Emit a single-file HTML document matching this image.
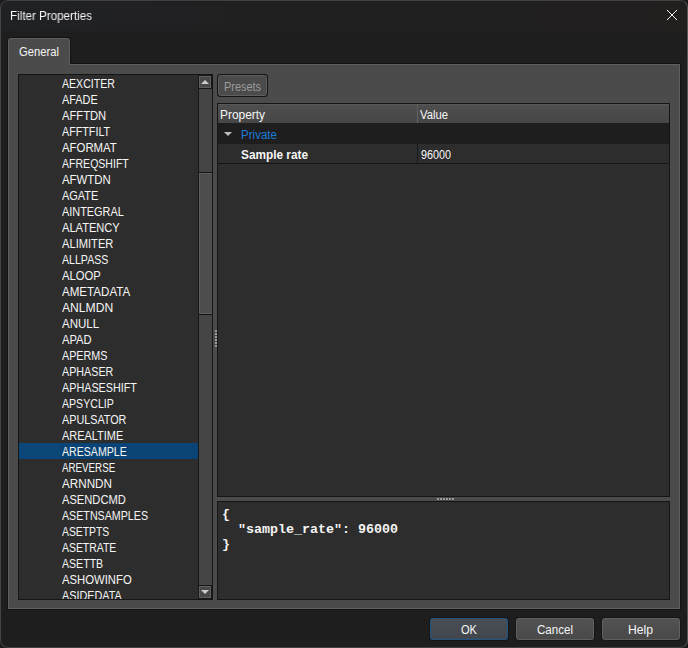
<!DOCTYPE html>
<html><head><meta charset="utf-8"><title>Filter Properties</title>
<style>
*{box-sizing:border-box;margin:0;padding:0}
html,body{width:688px;height:648px;overflow:hidden;background:#1b1b1b}
body{font-family:"Liberation Sans",sans-serif;font-size:12px;color:#f6f6f6;position:relative}
.abs{position:absolute}
#win{left:0;top:0;width:688px;height:648px;border:1px solid #434343;border-color:#404040 #575757 #434343 #454545;border-radius:8px;background:#1e1e1e;overflow:hidden}
#tbar{left:0;top:0;width:686px;height:30px;background:linear-gradient(90deg,#202124,#202020 50%,#221f1f)}
.t{position:absolute;white-space:nowrap;line-height:16px;height:16px;transform-origin:0 50%}
#pane{left:8px;top:64px;width:672px;height:545px;background:#4b4b4b;border:1px solid #5f5f5f;box-shadow:0 0 0 1px #121212}
#tab{left:8px;top:38px;width:62px;height:27px;background:#4b4b4b;border:1px solid #5f5f5f;border-bottom:0;border-radius:3px 3px 0 0;box-shadow:0 0 0 1px #121212}
.dark{background:#2d2d2d;border:1px solid #151515}
.row{position:absolute;left:0;width:179px;height:16px}
.row.sel{background:linear-gradient(90deg,#0b4779 41px,#0a4375 41px)}
.btn{position:absolute;height:22px;border:1px solid #616161;border-radius:2.5px;background:linear-gradient(#525252,#494949);box-shadow:0 0 0 1px #161616}
.dot{position:absolute;width:2px;height:2px;background:#9a9a9a}
</style></head><body>
<div id="win" class="abs">
<div id="tbar" class="abs"></div>
</div>
<div class="t" id="title" style="will-change:transform;left:9.5px;top:8px;transform:scaleX(0.968)">Filter Properties</div>
<svg class="abs" style="left:666px;top:9px" width="12" height="12" viewBox="0 0 12 12"><path d="M1 1L11 11M11 1L1 11" stroke="#f4f4f4" stroke-width="1" fill="none"/></svg>

<div id="pane" class="abs"></div>
<div class="abs" style="left:7px;top:37px;width:64px;height:27px;background:#121212;border-radius:4px 4px 0 0"></div>
<div class="abs" style="left:8px;top:38px;width:62px;height:27px;background:#5f5f5f;border-radius:3px 3px 0 0"></div>
<div class="abs" style="left:9px;top:39px;width:60px;height:27px;background:#4b4b4b;border-radius:2px 2px 0 0"></div>
<div class="t" id="tabtxt" style="left:19px;top:44px;transform:scaleX(0.937)">General</div>

<!-- list -->
<div id="list" class="abs dark" style="left:18px;top:74px;width:195px;height:526px;overflow:hidden">
<div id="rows" class="abs" style="left:0;top:0;width:179px;height:524px;overflow:hidden">
<div class="row" style="top:0px"><span class="t" style="left:43px;top:1px;transform:scaleX(0.88)">AEXCITER</span></div>
<div class="row" style="top:16px"><span class="t" style="left:43px;top:1px;transform:scaleX(0.907)">AFADE</span></div>
<div class="row" style="top:32px"><span class="t" style="left:43px;top:1px;transform:scaleX(0.934)">AFFTDN</span></div>
<div class="row" style="top:48px"><span class="t" style="left:43px;top:1px;transform:scaleX(0.896)">AFFTFILT</span></div>
<div class="row" style="top:64px"><span class="t" style="left:43px;top:1px;transform:scaleX(0.948)">AFORMAT</span></div>
<div class="row" style="top:80px"><span class="t" style="left:43px;top:1px;transform:scaleX(0.879)">AFREQSHIFT</span></div>
<div class="row" style="top:96px"><span class="t" style="left:43px;top:1px;transform:scaleX(0.951)">AFWTDN</span></div>
<div class="row" style="top:112px"><span class="t" style="left:43px;top:1px;transform:scaleX(0.912)">AGATE</span></div>
<div class="row" style="top:128px"><span class="t" style="left:43px;top:1px;transform:scaleX(0.909)">AINTEGRAL</span></div>
<div class="row" style="top:144px"><span class="t" style="left:43px;top:1px;transform:scaleX(0.925)">ALATENCY</span></div>
<div class="row" style="top:160px"><span class="t" style="left:43px;top:1px;transform:scaleX(0.929)">ALIMITER</span></div>
<div class="row" style="top:176px"><span class="t" style="left:43px;top:1px;transform:scaleX(0.884)">ALLPASS</span></div>
<div class="row" style="top:192px"><span class="t" style="left:43px;top:1px;transform:scaleX(0.938)">ALOOP</span></div>
<div class="row" style="top:208px"><span class="t" style="left:43px;top:1px;transform:scaleX(0.965)">AMETADATA</span></div>
<div class="row" style="top:224px"><span class="t" style="left:43px;top:1px;transform:scaleX(1.01)">ANLMDN</span></div>
<div class="row" style="top:240px"><span class="t" style="left:43px;top:1px;transform:scaleX(0.959)">ANULL</span></div>
<div class="row" style="top:256px"><span class="t" style="left:43px;top:1px;transform:scaleX(0.934)">APAD</span></div>
<div class="row" style="top:272px"><span class="t" style="left:43px;top:1px;transform:scaleX(0.896)">APERMS</span></div>
<div class="row" style="top:288px"><span class="t" style="left:43px;top:1px;transform:scaleX(0.896)">APHASER</span></div>
<div class="row" style="top:304px"><span class="t" style="left:43px;top:1px;transform:scaleX(0.899)">APHASESHIFT</span></div>
<div class="row" style="top:320px"><span class="t" style="left:43px;top:1px;transform:scaleX(0.882)">APSYCLIP</span></div>
<div class="row" style="top:336px"><span class="t" style="left:43px;top:1px;transform:scaleX(0.9)">APULSATOR</span></div>
<div class="row" style="top:352px"><span class="t" style="left:43px;top:1px;transform:scaleX(0.912)">AREALTIME</span></div>
<div class="row sel" style="top:368px"><span class="t" style="left:43px;top:1px;transform:scaleX(0.883)">ARESAMPLE</span></div>
<div class="row" style="top:384px"><span class="t" style="left:43px;top:1px;transform:scaleX(0.814)">AREVERSE</span></div>
<div class="row" style="top:400px"><span class="t" style="left:43px;top:1px;transform:scaleX(0.974)">ARNNDN</span></div>
<div class="row" style="top:416px"><span class="t" style="left:43px;top:1px;transform:scaleX(0.929)">ASENDCMD</span></div>
<div class="row" style="top:432px"><span class="t" style="left:43px;top:1px;transform:scaleX(0.89)">ASETNSAMPLES</span></div>
<div class="row" style="top:448px"><span class="t" style="left:43px;top:1px;transform:scaleX(0.865)">ASETPTS</span></div>
<div class="row" style="top:464px"><span class="t" style="left:43px;top:1px;transform:scaleX(0.869)">ASETRATE</span></div>
<div class="row" style="top:480px"><span class="t" style="left:43px;top:1px;transform:scaleX(0.882)">ASETTB</span></div>
<div class="row" style="top:496px"><span class="t" style="left:43px;top:1px;transform:scaleX(0.942)">ASHOWINFO</span></div>
<div class="row" style="top:512px"><span class="t" style="left:43px;top:1px;transform:scaleX(0.903)">ASIDEDATA</span></div>
</div>
<div id="sb" class="abs" style="left:179px;top:0;width:14px;height:524px;background:#181818">
  <div class="abs" style="left:1px;top:1px;width:12px;height:12px;background:#484848;border:1px solid #5e5e5e"></div>
  <svg class="abs" style="left:3px;top:5px" width="8" height="4" viewBox="0 0 8 4"><path d="M0 4L4 0L8 4Z" fill="#cccccc"/></svg>
  <div class="abs" style="left:1px;top:14px;width:13px;height:496px;background:#454545"></div>
  <div class="abs" style="left:1px;top:97px;width:13px;height:143px;background:#151515"></div>
  <div class="abs" style="left:1px;top:98px;width:13px;height:141px;background:#4d4d4d;border:1px solid #5e5e5e;border-right-color:#505050"></div>
  <div class="abs" style="left:1px;top:511px;width:12px;height:12px;background:#484848;border:1px solid #5e5e5e"></div>
  <svg class="abs" style="left:3px;top:515px" width="8" height="4" viewBox="0 0 8 4"><path d="M0 0L4 4L8 0Z" fill="#cccccc"/></svg>
</div>
</div>

<!-- vertical splitter dots -->
<div class="dot" style="left:215px;top:330px"></div><div class="dot" style="left:215px;top:333px"></div><div class="dot" style="left:215px;top:336px"></div>
<div class="dot" style="left:215px;top:339px"></div><div class="dot" style="left:215px;top:342px"></div><div class="dot" style="left:215px;top:345px"></div>

<!-- presets button (disabled) -->
<div class="btn" style="left:218px;top:75px;width:49px;height:21px;border-color:#5e5e5e;background:#4b4b4b"></div>
<div class="t" style="left:224px;top:79px;color:#9b9b9b;transform:scaleX(0.909)">Presets</div>

<!-- property table -->
<div class="abs dark" style="left:217px;top:103px;width:453px;height:394px">
  <div class="abs" style="left:0;top:0;width:451px;height:19px;background:linear-gradient(#4e4e4e,#464646);border-top:1px solid #575757"></div>
  <div class="abs" style="left:199px;top:0;width:1px;height:19px;background:#626262"></div>
  <div class="abs" style="left:0;top:19px;width:451px;height:21px;background:#1e1e1e"></div>
  <div class="abs" style="left:0;top:59px;width:451px;height:1px;background:#151515"></div>
  <div class="abs" style="left:199px;top:40px;width:1px;height:19px;background:#191919"></div>
  <svg class="abs" style="left:6px;top:27.5px" width="8" height="4" viewBox="0 0 8 4"><path d="M0 0L4 4L8 0Z" fill="#bdbdbd"/></svg>
</div>
<div class="t" style="left:220px;top:107px;transform:scaleX(0.992)">Property</div>
<div class="t" style="left:420px;top:107px;transform:scaleX(0.939)">Value</div>
<div class="t" style="left:241px;top:127px;color:#1c7bd8;transform:scaleX(0.964)">Private</div>
<div class="t" style="left:241px;top:147px;font-weight:700;transform:scaleX(0.985)">Sample rate</div>
<div class="t" style="left:421px;top:147px;transform:scaleX(0.899)">96000</div>

<!-- horizontal splitter dots -->
<div class="dot" style="left:437px;top:498px"></div><div class="dot" style="left:440px;top:498px"></div><div class="dot" style="left:443px;top:498px"></div>
<div class="dot" style="left:446px;top:498px"></div><div class="dot" style="left:449px;top:498px"></div><div class="dot" style="left:452px;top:498px"></div>

<!-- json text -->
<div class="abs dark" style="left:217px;top:501px;width:453px;height:99px">
<pre class="abs" id="json" style="left:4px;top:5px;font-family:'Liberation Mono',monospace;font-weight:700;font-size:13.33px;line-height:15px;color:#f4f4f4">{
  "sample_rate": 96000
}</pre>
</div>

<!-- dialog buttons -->
<div class="btn" style="left:430px;top:618px;width:78px;border-color:#1c5788;background:linear-gradient(#4a4f55,#41464c)"></div>
<div class="btn" style="left:516px;top:618px;width:78px"></div>
<div class="btn" style="left:602px;top:618px;width:78px"></div>
<div class="t" style="left:461px;top:622px;transform:scaleX(0.923)">OK</div>
<div class="t" style="left:537px;top:622px;transform:scaleX(0.964)">Cancel</div>
<div class="t" style="left:628px;top:622px;transform:scaleX(1.013)">Help</div>
</body></html>
